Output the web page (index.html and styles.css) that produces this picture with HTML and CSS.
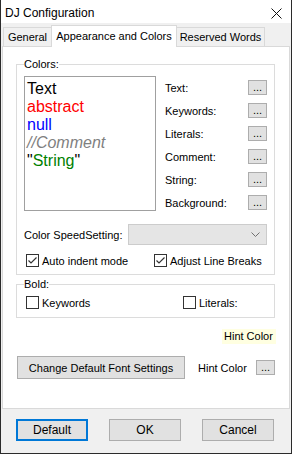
FILE: index.html
```html
<!DOCTYPE html>
<html lang="en">

<head>
    <meta charset="UTF-8" />
    <meta name="viewport" content="width=device-width, initial-scale=1.0" />
    <title>DJ Configuration</title>
    <link rel="stylesheet" href="styles.css">
</head>

<body>
    <div class="window">
        <!-- Title bar -->
        <div class="titlebar">
            <span class="title">DJ Configuration</span>
            <svg class="close" width="11" height="11" viewBox="0 0 11 11">
                <path d="M0.5 0.5 L10.5 10.5 M10.5 0.5 L0.5 10.5" stroke="#111" stroke-width="1" fill="none" />
            </svg>
        </div>

        <!-- Tabs -->
        <div class="tabs">
            <div class="tab tab-general">General</div>
            <div class="tab tab-active">Appearance and Colors</div>
            <div class="tab tab-reserved">Reserved Words</div>
        </div>

        <div class="panel">
            <fieldset class="group colors-group">
                <legend>Colors:</legend>
                <div class="colors-body">
                    <div class="preview">
                        <div class="pv-text">Text</div>
                        <div class="pv-keyword">abstract</div>
                        <div class="pv-literal">null</div>
                        <div class="pv-comment">//Comment</div>
                        <div class="pv-string"><span class="pv-quote">"</span>String<span class="pv-quote">"</span></div>
                    </div>
                    <div class="color-list">
                        <div class="color-row"><span>Text:</span><button class="dots">...</button></div>
                        <div class="color-row"><span>Keywords:</span><button class="dots">...</button></div>
                        <div class="color-row"><span>Literals:</span><button class="dots">...</button></div>
                        <div class="color-row"><span>Comment:</span><button class="dots">...</button></div>
                        <div class="color-row"><span>String:</span><button class="dots">...</button></div>
                        <div class="color-row"><span>Background:</span><button class="dots">...</button></div>
                    </div>
                </div>

                <div class="speed-row">
                    <span>Color SpeedSetting:</span>
                    <div class="combo">
                        <svg width="9" height="5" viewBox="0 0 9 5">
                            <path d="M0.5 0.5 L4.5 4.5 L8.5 0.5" stroke="#707070" fill="none" />
                        </svg>
                    </div>
                </div>

                <div class="check-row">
                    <label class="check check-auto"><span class="box checked"></span>Auto indent mode</label>
                    <label class="check check-adjust"><span class="box checked"></span>Adjust Line Breaks</label>
                </div>
            </fieldset>

            <fieldset class="group bold-group">
                <legend>Bold:</legend>
                <div class="check-row">
                    <label class="check check-keywords"><span class="box"></span>Keywords</label>
                    <label class="check check-literals"><span class="box"></span>Literals:</label>
                </div>
            </fieldset>

            <div class="hint-row">
                <span class="hint-sample">Hint Color</span>
            </div>

            <div class="font-row">
                <button class="btn font-btn">Change Default Font Settings</button>
                <span class="hint-label">Hint Color</span>
                <button class="dots hint-dots">...</button>
            </div>
        </div>

        <div class="footer">
            <button class="btn dlg-btn default-btn">Default</button>
            <button class="btn dlg-btn">OK</button>
            <button class="btn dlg-btn">Cancel</button>
        </div>
    </div>
</body>

</html>
```

FILE: styles.css
```css
/* Window */

body {
    margin: 0;
    font-family: "Liberation Sans", Arial, sans-serif;
    font-size: 11px;
    color: #000;
    background: #fff;
}

.window {
    width: 292px;
    height: 454px;
    box-sizing: border-box;
    border: 1px solid #2b2b2b;
    border-top: none;
    background: #f0f0f0;
    display: flex;
    flex-direction: column;
    white-space: nowrap;
}
/* Title bar */

.titlebar {
    height: 23px;
    background: #fff;
    display: flex;
    align-items: center;
    justify-content: space-between;
    padding: 0 9px 0 4px;
}

.title {
    font-size: 12px;
    color: #000;
    margin-top: 2px;
}

.close {
    margin-top: 4px;
}
/* Tabs */

.tabs {
    height: 24px;
    display: flex;
    align-items: flex-end;
    padding-left: 2px;
    position: relative;
    z-index: 1;
    margin-bottom: -1px;
}

.tab {
    box-sizing: border-box;
    height: 19px;
    border: 1px solid #d9d9d9;
    border-bottom: none;
    background: #f0f0f0;
    display: flex;
    align-items: center;
    justify-content: center;
    margin-bottom: 1px;
}

.tab-general {
    width: 48px;
    border-right: none;
}

.tab-active {
    width: 126px;
    height: 22px;
    background: #fff;
    margin-bottom: 0;
    padding-bottom: 2px;
}

.tab-reserved {
    width: 88px;
    border-left: none;
}
/* Panel */

.panel {
    height: 363px;
    box-sizing: border-box;
    margin: 0 1px;
    background: #fff;
    border: 1px solid #d9d9d9;
    padding: 10px 14px 0 13px;
}

.group {
    margin: 0;
    border: 1px solid #dcdcdc;
    padding: 0 7px;
}

.group legend {
    padding: 0;
    line-height: 14px;
}

.colors-group {
    padding-top: 5px;
    padding-bottom: 7px;
}

.colors-body {
    display: flex;
}

.preview {
    width: 132px;
    height: 135px;
    box-sizing: border-box;
    border: 1px solid #a0a0a0;
    padding: 3px 0 0 2px;
    font-size: 16px;
    line-height: 18px;
}

.pv-keyword {
    color: #ff0000;
}

.pv-literal {
    color: #0000ff;
}

.pv-comment {
    color: #808080;
    font-style: italic;
}

.pv-string {
    color: #008000;
}

.pv-quote {
    color: #000;
}

.color-list {
    flex: 1;
    margin-left: 9px;
    display: grid;
    grid-template-rows: repeat(6, 23px);
    align-content: start;
}

.color-row {
    display: flex;
    align-items: center;
    justify-content: space-between;
}

.dots {
    width: 19px;
    height: 15px;
    box-sizing: border-box;
    padding: 0 0 3px;
    border: 1px solid #adadad;
    background: #e1e1e1;
    font-family: "Liberation Sans", Arial, sans-serif;
    font-size: 11px;
    line-height: 8px;
    display: flex;
    align-items: flex-end;
    justify-content: center;
}
/* Speed setting */

.speed-row {
    display: flex;
    align-items: center;
    justify-content: space-between;
    margin-top: 10px;
}

.combo {
    width: 139px;
    height: 21px;
    box-sizing: border-box;
    border: 1px solid #cccccc;
    background: #e5e5e5;
    display: flex;
    align-items: center;
    justify-content: flex-end;
    padding-right: 6px;
}
/* Checkboxes */

.check-row {
    display: flex;
    height: 13px;
    margin-top: 9px;
}

.check {
    display: flex;
    align-items: center;
}

.box {
    width: 13px;
    height: 13px;
    box-sizing: border-box;
    border: 1px solid #333;
    background: #fff;
    margin-right: 3px;
}

.box.checked {
    background: #fff url("data:image/svg+xml;utf8,<svg xmlns='http://www.w3.org/2000/svg' width='11' height='11'><path d='M1.5 5.5 L4 8 L9.5 2.5' stroke='%23333' stroke-width='1.2' fill='none'/></svg>") no-repeat center;
}

.check-auto {
    margin-left: 2px;
    width: 128px;
}

.bold-group {
    margin-top: 2px;
    padding-top: 1px;
    padding-bottom: 8px;
}

.bold-group .check-row {
    margin-top: 4px;
}

.check-keywords {
    margin-left: 2px;
    width: 157px;
}
/* Hint color */

.hint-row {
    display: flex;
    justify-content: flex-end;
    margin-top: 11px;
    margin-right: -1px;
}

.hint-sample {
    background: #ffffe1;
    height: 15px;
    line-height: 15px;
    width: 54px;
    box-sizing: border-box;
    padding-left: 2px;
}

.font-row {
    display: flex;
    align-items: center;
    margin-top: 12px;
    margin-left: 1px;
}

.btn {
    box-sizing: border-box;
    border: 1px solid #adadad;
    background: #e1e1e1;
    font-family: "Liberation Sans", Arial, sans-serif;
    font-size: 11px;
    color: #000;
    padding: 0;
    white-space: nowrap;
}

.font-btn {
    width: 168px;
    height: 23px;
}

.hint-label {
    margin-left: 13px;
}

.hint-dots {
    margin-left: auto;
}
/* Footer */

.footer {
    flex: 1;
    display: flex;
    gap: 21px;
    padding: 10px 0 0 15px;
}

.dlg-btn {
    width: 72px;
    height: 22px;
    font-size: 12px;
}

.default-btn {
    border: 2px solid #0078d7;
}
```
